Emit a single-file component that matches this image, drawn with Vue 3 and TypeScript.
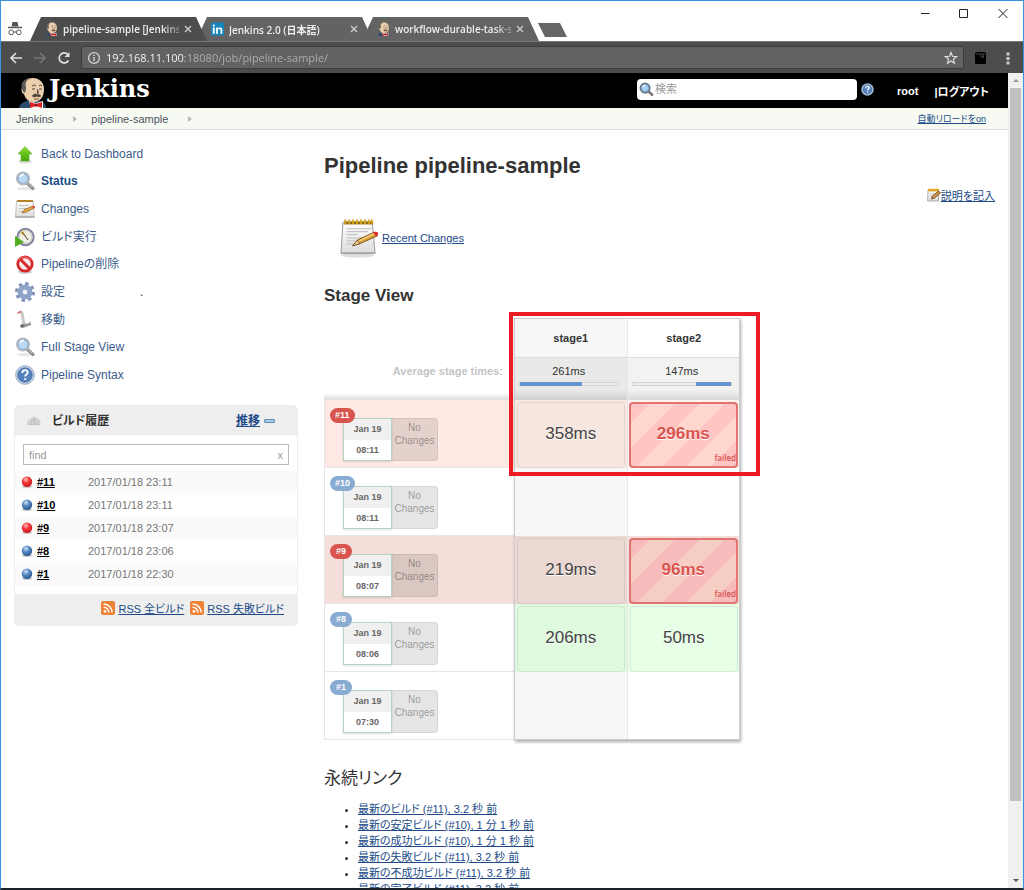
<script setup lang="ts">
import { ref } from 'vue'

interface Tab { title: string; icon: string; active?: boolean }
interface Task { label: string; icon: string; current?: boolean; dot?: boolean }
interface Build { id: string; time: string; ball: string }
interface Stage { time: string; status: 'ok' | 'failed' | 'tinted' | 'none' }
interface Run { id: string; date: string; time: string; tone: string; badge: string; stages: Stage[] }

const tabs: Tab[] = [
  { title: 'pipeline-sample [Jenkins', icon: 'butler', active: true },
  { title: 'Jenkins 2.0 (日本語)', icon: 'linkedin' },
  { title: 'workflow-durable-task-s', icon: 'butler' },
]

const tasks: Task[] = [
  { label: 'Back to Dashboard', icon: 'up' },
  { label: 'Status', icon: 'search', current: true },
  { label: 'Changes', icon: 'notepad-small' },
  { label: 'ビルド実行', icon: 'clock' },
  { label: 'Pipelineの削除', icon: 'ban' },
  { label: '設定', icon: 'gear', dot: true },
  { label: '移動', icon: 'truck' },
  { label: 'Full Stage View', icon: 'search' },
  { label: 'Pipeline Syntax', icon: 'help' },
]

const builds: Build[] = [
  { id: '#11', time: '2017/01/18 23:11', ball: 'red' },
  { id: '#10', time: '2017/01/18 23:11', ball: 'blue' },
  { id: '#9', time: '2017/01/18 23:07', ball: 'red' },
  { id: '#8', time: '2017/01/18 23:06', ball: 'blue' },
  { id: '#1', time: '2017/01/18 22:30', ball: 'blue' },
]

const averages = [
  { name: 'stage1', time: '261ms', start: 0, share: 64 },
  { name: 'stage2', time: '147ms', start: 64, share: 36 },
]

const none: Stage = { time: '', status: 'none' }
const runs: Run[] = [
  { id: '#11', date: 'Jan 19', time: '08:11', tone: 'fail', badge: 'red', stages: [{ time: '358ms', status: 'tinted' }, { time: '296ms', status: 'failed' }] },
  { id: '#10', date: 'Jan 19', time: '08:11', tone: 'plain', badge: 'blue', stages: [none, none] },
  { id: '#9', date: 'Jan 19', time: '08:07', tone: 'fail-dark', badge: 'red', stages: [{ time: '219ms', status: 'tinted' }, { time: '96ms', status: 'failed' }] },
  { id: '#8', date: 'Jan 19', time: '08:06', tone: 'plain', badge: 'blue', stages: [{ time: '206ms', status: 'ok' }, { time: '50ms', status: 'ok' }] },
  { id: '#1', date: 'Jan 19', time: '07:30', tone: 'plain', badge: 'blue', stages: [none, none] },
]

const permalinks = [
  '最新のビルド (#11), 3.2 秒 前',
  '最新の安定ビルド (#10), 1 分 1 秒 前',
  '最新の成功ビルド (#10), 1 分 1 秒 前',
  '最新の失敗ビルド (#11), 3.2 秒 前',
  '最新の不成功ビルド (#11), 3.2 秒 前',
  '最新の完了ビルド (#11), 3.2 秒 前',
]

const address = ref('192.168.11.100:18080/job/pipeline-sample/')
const query = ref('')
const filter = ref('')
</script>

<template>
  <svg class="defs" aria-hidden="true">
    <defs>
      <linearGradient id="g-green" x2="0" y2="1"><stop offset="0" stop-color="#8bdc2c" /><stop offset="1" stop-color="#43a50e" /></linearGradient>
      <linearGradient id="g-paper" x2="0" y2="1"><stop offset="0" stop-color="#fff" /><stop offset="1" stop-color="#dcdcda" /></linearGradient>
      <radialGradient id="g-ball-red" cx=".4" cy=".3" r=".7"><stop offset="0" stop-color="#ffc4c0" /><stop offset=".45" stop-color="#f5383a" /><stop offset="1" stop-color="#c8161d" /></radialGradient>
      <radialGradient id="g-ball-blue" cx=".4" cy=".3" r=".7"><stop offset="0" stop-color="#d3e4f5" /><stop offset=".45" stop-color="#5a8cc4" /><stop offset="1" stop-color="#28568f" /></radialGradient>
    </defs>
    <symbol id="butler" viewBox="0 0 28 31">
      <path d="M1 31c1-5 5-6 10-8l12 1c3 1 5 4 5 7z" fill="#2c4a6c" />
      <path d="M11 24l7 2 7-2v7H13z" fill="#f4f1ea" />
      <path d="M4 11C4 4 9 1 15 1s11 4 11 11c0 8-4 13-10 13S7 21 6 17c-2 0-3-4-2-6z" fill="#ecd0ae" />
      <path d="M4 12C2 5 7 1 13 1 8 3 7 6 8 10c0 3 0 5-2 6z" fill="#5f5c58" />
      <path d="M14 9q3-2 4 0M21 9q2-2 3 0M14 12h3M21 12h3" fill="none" stroke="#51422f" />
      <path d="M19 12q3 4 0 5M14 19q4-4 5-1 2-2 4 1-3 2-4 0-2 2-5 0z" fill="#4e4339" stroke="#4e4339" stroke-width=".5" />
      <path d="M16 22h5" stroke="#8e4e3b" />
      <path d="M12 25l6 2 6-2v6l-6-2-6 2z" fill="#db2328" />
      <circle cx="18" cy="28" r="1.500" fill="#8e1116" />
    </symbol>
    <symbol id="linkedin" viewBox="0 0 14 14">
      <rect width="14" height="14" rx="1" fill="#1686bd" />
      <path d="M2 5.500h2V12H2zM5.500 5.500h2v1c1-1.700 4.700-1.700 4.700 1.500v4h-2V8.500c0-2-2.700-1.700-2.700 0V12h-2z" fill="#fff" /><circle cx="3" cy="3.300" r="1.200" fill="#fff" />
    </symbol>
    <symbol id="up" viewBox="0 0 20 20">
      <ellipse cx="10" cy="17.500" rx="7" ry="2" fill="#ddd" /><path d="M10 2.500l7 7.500h-3v7H6v-7H3z" fill="url(#g-green)" stroke="#5bb02c" stroke-width=".6" />
    </symbol>
    <symbol id="search" viewBox="0 0 20 20">
      <ellipse cx="10" cy="17.500" rx="8" ry="1.800" fill="#e8e8e8" />
      <path d="M12 12l6 5.500" stroke="#8d8d8d" stroke-width="3.200" stroke-linecap="round" /><path d="M13 12.500l4.500 4" stroke="#c9c9c9" stroke-width="1" />
      <circle cx="8" cy="7.500" r="6" fill="#bad9f4" stroke="#b4b8bd" stroke-width="2" /><circle cx="8" cy="7.500" r="4.800" fill="none" stroke="#7ba6d4" stroke-width=".7" /><path d="M5 6q1-3 4-2.500" fill="none" stroke="#fff" stroke-width="1.500" />
    </symbol>
    <symbol id="search-dark" viewBox="0 0 16 16">
      <path d="M10 10l4 3.500" stroke="#777" stroke-width="2.800" stroke-linecap="round" />
      <circle cx="6.500" cy="6.500" r="5" fill="#a4cdf0" stroke="#6f7780" stroke-width="1.800" /><circle cx="6.500" cy="6.500" r="3.900" fill="none" stroke="#4e8fd0" stroke-width=".6" /><path d="M4 5.500q1-2 3-2" fill="none" stroke="#fff" stroke-width="1.200" />
    </symbol>
    <symbol id="notepad-small" viewBox="0 0 20 20">
      <path d="M1.500 2h16.500l1.300 16.500H.5z" fill="url(#g-paper)" stroke="#b5b5b5" stroke-width=".8" /><path d="M.5 17h18.800v1.800H.5z" fill="#b3b3b0" /><path d="M2 1h16v2H2z" fill="#b8822a" /><path d="M4 6.500h10M4 9.500h8M4 12.500h5" stroke="#c4c4c4" />
      <path d="M7 14l2.500-3.500L18 7l1.200 2-8.200 4.200z" fill="#e5a94a" stroke="#8a5a1c" stroke-width=".7" /><path d="M17 7.200l2.200-.7.800 2-1.700.9z" fill="#e14540" />
    </symbol>
    <symbol id="notepad-edit" viewBox="0 0 14 14">
      <path d="M1 2h10.500v11H.7z" fill="url(#g-paper)" stroke="#999" stroke-width=".8" /><path d="M1 .8h11v2.600H1z" fill="#e2a52b" /><path d="M3 6h6M3 8.300h4" stroke="#bbb" stroke-width=".8" />
      <path d="M4.500 11l1-3L11.500 3l2 2-6 5z" fill="#d59a42" stroke="#5c3a12" stroke-width=".8" />
    </symbol>
    <symbol id="notepad" viewBox="0 0 40 40">
      <ellipse cx="18" cy="38" rx="17" ry="2" fill="#ddd" />
      <path d="M3 4h30l3 32H1z" fill="url(#g-paper)" stroke="#999" /><path d="M1 34.500h35v2H1z" fill="#a4a4a4" />
      <path d="M4 3h30v3H4z" fill="#8a6410" /><path d="M5.500 1v5M9.500 1v5M13.500 1v5M17.500 1v5M21.500 1v5M25.500 1v5M29.500 1v5M32.500 1v5" stroke="#d1a321" stroke-width="2" />
      <path d="M7 10.500h25M7 13.500h22M7 16.500h11M7 20h16M7 23h9M7 26h8" stroke="#bbb" />
      <path d="M13 28l5-6 17-8 3 4-18 8z" fill="#d99e35" stroke="#69400d" stroke-width=".8" /><path d="M18 24l17-8.500" stroke="#f6d68a" stroke-width="1.300" /><path d="M13 28l5-6 2 4z" fill="#ecd2a0" stroke="#69400d" stroke-width=".7" /><path d="M34 14.500l2.500-1.200q3.500.7 2.300 4.200L37 18.500z" fill="#e02c2f" />
    </symbol>
    <symbol id="clock" viewBox="0 0 20 20">
      <circle cx="10.500" cy="10" r="8.200" fill="#eeeee2" stroke="#8286a0" stroke-width="2" /><circle cx="10.500" cy="10" r="6.500" fill="none" stroke="#bbb" stroke-width=".7" />
      <path d="M11 10L8 3.500 5 6z" fill="#f1bf45" /><path d="M7 5l4 5 2 3" fill="none" stroke="#444" />
      <path d="M0 9l9 6-9 5z" fill="#52ae1f" />
    </symbol>
    <symbol id="ban" viewBox="0 0 20 20">
      <ellipse cx="10" cy="18" rx="7" ry="1.800" fill="#ccc" /><circle cx="10" cy="10" r="7.200" fill="#f7e9e9" stroke="#d6272b" stroke-width="2.800" /><path d="M5 5l10 10" stroke="#d6272b" stroke-width="3" /><path d="M4 6q5-6 12 0" fill="none" stroke="#f47873" />
    </symbol>
    <symbol id="gear" viewBox="0 0 20 20">
      <circle cx="10" cy="10" r="8" fill="none" stroke="#7e90b6" stroke-width="4" stroke-dasharray="3.140 3.140" /><circle cx="10" cy="10" r="5" fill="none" stroke="#8fa2c8" stroke-width="5" /><circle cx="10" cy="10" r="2.700" fill="#f3f5fa" stroke="#7d90b9" stroke-width=".6" />
    </symbol>
    <symbol id="truck" viewBox="0 0 20 20">
      <path d="M4 2l3 1 2 12" fill="none" stroke="#c9c9c6" stroke-width="3" /><path d="M2.500 3.500q1-2 4-1.500" fill="none" stroke="#dc5a57" stroke-width="1.300" /><path d="M7 14l9-1v2l-8 3z" fill="#969696" /><circle cx="7" cy="16" r="1.800" fill="#666" /><path d="M15 11.500v3.500" stroke="#888" />
    </symbol>
    <symbol id="help" viewBox="0 0 20 20">
      <circle cx="10" cy="10" r="9.300" fill="#d0dcec" stroke="#7b93b5" stroke-width=".8" /><circle cx="10" cy="10" r="7.300" fill="#5580bb" stroke="#3c659f" stroke-width=".7" /><path d="M7.300 8c0-4 5.700-3.600 5.400-.5-.2 1.800-2.500 1.900-2.500 4M10.200 13.200v1.800" fill="none" stroke="#fff" stroke-width="1.900" />
    </symbol>
    <symbol id="rss" viewBox="0 0 14 14">
      <rect width="14" height="14" rx="2" fill="#ee8338" /><circle cx="4" cy="10.300" r="1.400" fill="#fff" /><path d="M2.600 6.200a5.300 5.300 0 0 1 5.300 5.300M2.600 3a8.500 8.500 0 0 1 8.500 8.500" fill="none" stroke="#fff" stroke-width="1.500" />
    </symbol>
    <symbol id="ball-red" viewBox="0 0 12 12"><ellipse cx="6" cy="10.500" rx="5" ry="1.500" fill="#ccc" /><circle cx="6" cy="5.700" r="5.200" fill="url(#g-ball-red)" /></symbol>
    <symbol id="ball-blue" viewBox="0 0 12 12"><ellipse cx="6" cy="10.500" rx="5" ry="1.500" fill="#ccc" /><circle cx="6" cy="5.700" r="5.200" fill="url(#g-ball-blue)" /></symbol>
    <symbol id="weather" viewBox="0 0 14 10">
      <path d="M1 8.500Q0 5 3 4q2-4 6-2 4 1 4 6.500z" fill="#d8d8d8" stroke="#bbb" stroke-width=".8" /><path d="M4 8V5l3-2 3 3v2M7 3v5" fill="none" stroke="#aaa" stroke-width=".7" />
    </symbol>
  </svg>

  <div class="window">
    <header class="tabstrip">
      <svg class="incognito" viewBox="0 0 14 15" fill="none" stroke="#555"><path d="M3.500 5.500l1-4.500h5l1 4.500z" fill="#555" stroke="none" /><path d="M0 6.500h14" stroke-width="1.400" /><circle cx="3.200" cy="11.300" r="2.400" /><circle cx="10.800" cy="11.300" r="2.400" /><path d="M5.500 11h3" /></svg>
      <nav class="tabs">
        <div v-for="(tab, i) in tabs" :key="i" class="tab" :class="{ active: tab.active }">
          <svg class="favicon"><use :href="'#' + tab.icon" /></svg>
          <span class="tab-title">{{ tab.title }}</span>
          <button class="tab-close" aria-label="閉じる"><svg viewBox="0 0 8 8"><path d="M1 1l6 6M7 1L1 7" stroke="#ccc" stroke-width="1.400" /></svg></button>
        </div>
        <button class="new-tab" aria-label="新しいタブ"></button>
      </nav>
      <div class="controls">
        <button aria-label="最小化"><svg viewBox="0 0 10 10"><path d="M1 5.500h8.500" stroke="#222" /></svg></button>
        <button aria-label="最大化"><svg viewBox="0 0 10 10"><path d="M.5 1.500h8v8h-8z" fill="none" stroke="#222" /></svg></button>
        <button aria-label="ウィンドウを閉じる"><svg viewBox="0 0 10 10"><path d="M.5 1l9 9M9.500 1l-9 9" stroke="#222" /></svg></button>
      </div>
    </header>

    <div class="toolbar">
      <button aria-label="戻る"><svg viewBox="0 0 14 14" fill="none" stroke="#e2e2e2" stroke-width="1.600"><path d="M13 7H2M7 2L2 7l5 5" /></svg></button>
      <button aria-label="進む"><svg viewBox="0 0 14 14" fill="none" stroke="#757575" stroke-width="1.600"><path d="M1 7h11M7 2l5 5-5 5" /></svg></button>
      <button aria-label="再読み込み"><svg viewBox="0 0 14 14" fill="none" stroke="#e2e2e2" stroke-width="1.700"><path d="M11.500 9.500A5 5 0 1 1 10.800 3.500" /><path d="M12.500 1v5h-5z" fill="#e2e2e2" stroke="none" /></svg></button>
      <div class="address">
        <svg viewBox="0 0 14 14" fill="none" stroke="#d5d5d5"><circle cx="7" cy="7" r="5.400" stroke-width="1.300" /><path d="M7 6v4M7 3.800v1.300" stroke-width="1.500" /></svg>
        <input v-model="address" aria-label="アドレス" />
        <button aria-label="ブックマーク"><svg viewBox="0 0 14 14" fill="none" stroke="#ddd" stroke-width="1.200"><path d="M7 1.500l1.500 3.800 4 .3-3.100 2.600 1 4L7 10l-3.400 2.200 1-4-3.100-2.600 4-.3z" /></svg></button>
      </div>
      <button class="ext" aria-label="拡張機能"><svg viewBox="0 0 12 12"><rect x="1" width="11" height="12" rx="1.500" /><path d="M2 2h9M7 2.500v3l1.200-1L9.500 5.500v-3" fill="none" stroke="#555" stroke-width=".8" /></svg></button>
      <button class="more" aria-label="メニュー"><svg viewBox="0 0 4 14" fill="#ccc"><rect x=".5" y="1.500" width="3" height="3" /><rect x=".5" y="6" width="3" height="3" /><rect x=".5" y="10.500" width="3" height="3" /></svg></button>
    </div>

    <div class="viewport">
      <div class="page">
        <header class="masthead">
          <a class="brand" href="#"><svg><use href="#butler" /></svg><span>Jenkins</span></a>
          <div class="masthead-right">
            <label class="search"><svg><use href="#search-dark" /></svg><input v-model="query" type="text" placeholder="検索" aria-label="検索" /></label>
            <a class="search-help" href="#" aria-label="ヘルプ"><svg><use href="#help" /></svg></a>
            <a class="user" href="#">root</a>
            <a class="logout" href="#">|ログアウト</a>
          </div>
        </header>
        <nav class="crumbs">
          <a href="#">Jenkins</a><i class="chevron"></i>
          <a href="#">pipeline-sample</a><i class="chevron"></i>
          <a class="reload" href="#">自動リロードをon</a>
        </nav>

        <div class="body">
          <aside>
            <nav class="tasks">
              <div v-for="task in tasks" :key="task.label" class="task">
                <a href="#" :class="{ current: task.current }"><svg><use :href="'#' + task.icon" /></svg><span>{{ task.label }}</span></a>
                <span v-if="task.dot" class="dot">.</span>
              </div>
            </nav>

            <section class="history">
              <header>
                <svg><use href="#weather" /></svg>
                <h2>ビルド履歴</h2>
                <a href="#">推移</a>
                <button class="collapse" aria-label="折りたたむ"></button>
              </header>
              <div class="filter">
                <input v-model="filter" type="text" placeholder="find" aria-label="find" />
                <button aria-label="クリア" @click="filter = ''">x</button>
              </div>
              <ul>
                <li v-for="build in builds" :key="build.id">
                  <svg><use :href="'#ball-' + build.ball" /></svg>
                  <a href="#">{{ build.id }}</a>
                  <time>{{ build.time }}</time>
                </li>
              </ul>
              <footer>
                <a href="#"><svg><use href="#rss" /></svg><span>RSS 全ビルド</span></a>
                <a href="#"><svg><use href="#rss" /></svg><span>RSS 失敗ビルド</span></a>
              </footer>
            </section>
          </aside>

          <main>
            <h1>Pipeline pipeline-sample</h1>
            <p class="describe"><a href="#"><svg><use href="#notepad-edit" /></svg><span>説明を記入</span></a></p>
            <p class="recent"><a href="#"><svg><use href="#notepad" /></svg><span>Recent Changes</span></a></p>
            <h2>Stage View</h2>

            <div class="stage-view">
              <table>
                <thead>
                  <tr class="names"><td></td><th v-for="a in averages" :key="a.name" scope="col">{{ a.name }}</th></tr>
                  <tr class="averages">
                    <th scope="row">Average stage times:</th>
                    <td v-for="a in averages" :key="a.name">
                      <div>{{ a.time }}</div>
                      <div class="meter"><div :style="{ marginLeft: a.start + '%', width: a.share + '%' }"></div></div>
                    </td>
                  </tr>
                </thead>
                <tbody>
                  <tr v-for="run in runs" :key="run.id" :class="run.tone">
                    <th scope="row">
                      <div class="run">
                        <span class="badge" :class="run.badge">{{ run.id }}</span>
                        <div class="when"><span>{{ run.date }}</span><span>{{ run.time }}</span></div>
                        <div class="changes">No<br />Changes</div>
                      </div>
                    </th>
                    <td v-for="(stage, i) in run.stages" :key="i" :class="stage.status">
                      <div class="cell">{{ stage.time }}<small v-if="stage.status === 'failed'">failed</small></div>
                    </td>
                  </tr>
                </tbody>
              </table>
              <div class="frame"></div>
              <div class="highlight"></div>
            </div>

            <h3>永続リンク</h3>
            <ul class="permalinks">
              <li v-for="link in permalinks" :key="link"><a href="#">{{ link }}</a></li>
            </ul>
          </main>
        </div>
      </div>
      <div class="scrollbar"><i class="arrow up"></i><i class="thumb"></i><i class="rest"></i><i class="arrow down"></i></div>
    </div>
  </div>
</template>

<style>
body { margin: 0; }
</style>

<style scoped>
* { box-sizing: border-box; }
h1, h2, h3, p, ul { margin: 0; padding: 0; }
button { padding: 0; border: 0; background: none; font: inherit; color: inherit; display: flex; align-items: center; justify-content: center; }
input { min-width: 0; border: 0; padding: 0; background: none; outline: 0; font: inherit; color: inherit; }
a { color: #204a87; text-decoration: none; }
svg { display: block; flex: none; }
.defs { position: absolute; width: 0; height: 0; }

.window {
  display: flex; flex-direction: column; height: 100vh; overflow: hidden;
  border: 1px solid #3d92dc; border-bottom: 2px solid #1b2329; background: #fff;
  font-family: "Liberation Sans", "Noto Sans CJK JP", sans-serif; font-size: 12px; color: #333;
  font-feature-settings: "palt";
}

.tabstrip { display: flex; height: 40px; flex: none; font-family: "Open Sans", "Noto Sans CJK JP", sans-serif; }
.incognito { width: 14px; height: 15px; margin: 20px 0 0 7px; }
.tabs { display: flex; align-items: flex-end; margin-left: 8px; }
.tab { display: flex; align-items: center; width: 177px; height: 24px; margin-right: -11px; padding: 0 15px; background: #636363; clip-path: polygon(11px 0, calc(100% - 11px) 0, 100% 100%, 0 100%); }
.tab.active { background: #4d4d4d; position: relative; z-index: 1; }
.favicon { width: 13px; height: 14px; }
.tab-title { flex: 1; min-width: 0; margin-left: 5px; white-space: nowrap; font-size: 10px; font-weight: 600; color: #eee; mask-image: linear-gradient(90deg, #000 100px, #0006 114px); }
.tab-close { width: 8px; height: 8px; margin-left: 5px; }
.tab-close svg { width: 8px; height: 8px; }
.new-tab { align-self: center; width: 29px; height: 14px; margin: 18px 0 0 10px; background: #666; clip-path: polygon(0 0, 22px 0, 100% 100%, 7px 100%); }
.controls { display: flex; gap: 29px; margin: 7px 15px 0 auto; height: 10px; }
.controls svg { width: 10px; height: 10px; }

.toolbar { display: flex; align-items: center; height: 32px; flex: none; padding: 0 13px 0 8px; gap: 10px; background: #4d4d4d; border-top: 1px solid #777; }
.toolbar svg { width: 14px; height: 14px; }
.address { flex: 1; display: flex; align-items: center; height: 23px; padding: 0 5px; gap: 5px; border: 1px solid #3d3d3d; border-radius: 2px; background: #626262; font-family: "Open Sans", sans-serif; font-size: 11px; }
.address input { flex: 1; background: linear-gradient(90deg, #fff 79px, #b0b0b0 79px); -webkit-background-clip: text; background-clip: text; color: transparent; }
.toolbar .ext svg { width: 12px; height: 12px; }
.ext { margin: 0 10px 0 0; }
.toolbar .more svg { width: 4px; }

.viewport { flex: 1; min-height: 0; display: flex; }
.page { flex: 1; min-width: 0; overflow: hidden; }
.scrollbar { width: 15px; padding: 0 2px; display: flex; flex-direction: column; align-items: stretch; background: #f0f0f0; }
.arrow { height: 15px; display: flex; align-items: center; justify-content: center; }
.arrow::before { content: ""; border: 3px solid transparent; border-top-width: 0; border-bottom-color: #999; }
.arrow.down::before { border-width: 3px 3px 0; border-color: #555 transparent; }
.thumb { flex: 713; background: #c1c1c1; }
.rest { flex: 72; }

.masthead { display: flex; align-items: center; justify-content: space-between; height: 35px; background: #000; padding: 0 19px 0 17px; }
.brand { display: flex; align-items: center; gap: 3px; color: #fff; font-family: "DejaVu Serif", serif; font-weight: bold; font-size: 24px; line-height: 32px; height: 35px; padding-bottom: 3px; }
.brand svg { width: 28px; height: 31px; margin-top: 7px; }
.masthead-right { display: flex; align-items: center; font-size: 11px; font-weight: bold; }
.masthead-right a { color: #fff; }
.search { display: flex; align-items: center; gap: 1px; width: 220px; height: 21px; padding: 0 2px; margin-bottom: 3px; border-radius: 4px; background: #fff; font-weight: normal; }
.search svg { width: 15px; height: 15px; }
.search input { flex: 1; color: #333; }
input::placeholder { color: #999; opacity: 1; }
.search-help { margin: 0 23px 2px 4px; }
.search-help svg { width: 13px; height: 13px; }
.user { margin-right: 16px; }
.crumbs { display: flex; align-items: center; height: 22px; padding: 0 22px 0 15px; border-bottom: 1px solid #ddd; background: #f6faf2; font-size: 11px; }
.crumbs a { color: #4d545d; }
.chevron { margin: 0 14px 0 20px; border: 3px solid transparent; border-left: 4px solid #bbb; border-right: 0; }
.crumbs .reload { margin-left: auto; font-size: 9px; color: #204a87; text-decoration: underline; }

.body { display: flex; }
aside { width: 297px; flex: none; padding: 10px 0 0 13px; }
.tasks { display: grid; grid-auto-rows: 1fr; height: 249px; }
.task { display: flex; align-items: center; padding-left: 1px; }
.task a { display: flex; align-items: center; gap: 6px; line-height: 16px; color: #3b5c8c; }
.task a.current { font-weight: bold; color: #204a87; }
.task svg { width: 20px; height: 20px; }
.dot { margin-left: 75px; }

.history { margin-top: 16px; border: 1px solid #eee; border-radius: 5px; background: #fff; overflow: hidden; }
.history header { display: flex; align-items: center; height: 29px; padding: 0 22px 0 12px; background: #eee; }
.history header svg { width: 14px; height: 10px; }
.history h2 { flex: 1; margin-left: 11px; font-size: 12px; line-height: 16px; }
.history header a { font-weight: bold; text-decoration: underline; line-height: 16px; }
.collapse { width: 11px; height: 4px; margin-left: 4px; border: 1px solid #5d8eba; background: #a8cbe5; border-radius: 1px; }
.filter { display: flex; align-items: center; height: 21px; margin: 9px 8px 5px; padding: 0 5px; border: 1px solid #bbb; font-size: 11px; color: #999; }
.filter input { flex: 1; color: #333; }
.history ul { display: grid; grid-auto-rows: 1fr; height: 116px; list-style: none; font-size: 11px; }
.history li { display: flex; align-items: center; padding-left: 6px; }
.history li:nth-child(odd) { background: #fafafa; }
.history li svg { width: 12px; height: 12px; margin-right: 4px; }
.history li a { width: 51px; font-weight: bold; color: #000; text-decoration: underline; }
.history time { color: #777; }
.history footer { display: flex; justify-content: flex-end; gap: 6px; margin-top: 8px; height: 31px; padding: 0 13px 3px 0; background: #eee; font-size: 11px; }
.history footer a { display: flex; align-items: center; gap: 3px; }
.history footer span { text-decoration: underline; }
.history footer svg { width: 14px; height: 14px; }

main { flex: 1; min-width: 0; padding: 23px 13px 0 26px; }
h1 { font-size: 22px; line-height: 26px; }
.describe { display: flex; justify-content: flex-end; height: 16px; margin-top: 8px; font-size: 11px; }
.describe a, .recent a { display: flex; align-items: center; }
.describe svg { width: 14px; height: 14px; }
.describe span, .recent span { text-decoration: underline; }
.recent { display: flex; margin: 15px 0 0 16px; font-size: 11px; }
.recent a { gap: 3px; }
.recent svg { width: 39px; height: 40px; }
main h2 { margin-top: 28px; font-size: 17px; line-height: 20px; }

.stage-view { position: relative; width: 416px; margin-top: 12px; }
table { width: 100%; table-layout: fixed; border-collapse: separate; border-spacing: 0; }
td, th { padding: 0; text-align: center; }
tr > :first-child { width: 191px; }
.names th { height: 40px; font-size: 11px; border-bottom: 1px solid #ddd; }
.names th:nth-child(2) { background: #f7f7f7; }
tr > :nth-child(2) { border-right: 1px solid #e6e6e6; }
.averages > * { height: 42px; padding: 5px 8px 0 4px; vertical-align: top; font-size: 11px; line-height: 16px; }
.averages th { padding: 5px 12px 0 0; text-align: right; color: #c4c4c4; background: linear-gradient(transparent 35px, #ddd); }
.averages td { background: linear-gradient(#f2f2f1 32px, #d8d8d7); }
.averages td:nth-child(2) { background: linear-gradient(#e9e9e8 32px, #cfcfcf); }
.meter { height: 4px; margin-top: 3px; border: 1px solid #d3d3d3; background: #eee; }
.meter div { height: 4px; margin-top: -1px; background: #6594d2; }
tbody th { height: 68px; border: 1px solid #e6e6e6; border-top: 0; border-right: 0; background-clip: padding-box; font-weight: normal; }
tbody td { height: 68px; padding: 2px 2px 0 2px; }
tbody td:nth-child(2) { background: #f7f7f7; }
.fail > th { background: #ffe9e4; }
.fail > td.tinted { background: #f8e6e0; }
.fail-dark > th { background: #f3ded9; }
.fail-dark > td.tinted { background: #ecd8d2; }
tbody td.failed { padding: 2px 2px 0 1px; }
.fail > td.failed { background: #fff2ef; }
.fail-dark > td.failed { background: #f5dfda; }
tbody td.ok { background: #e6ffe6; }
tbody td.ok:nth-child(2) { background: #dffadf; }

.run { position: relative; display: flex; width: 95px; height: 43px; margin: 11px 0 0 18px; }
.when { width: 49px; display: flex; flex-direction: column; border: 1px solid #b5d2c4; background: #fff; font-size: 9px; font-weight: bold; color: #666; box-shadow: 0 1px 2px #0002; }
.when span { flex: 1; line-height: 21px; }
.when span:first-child { background: #f0f0f0; }
.changes { flex: 1; padding-top: 2px; border: 1px solid #0001; border-left: 0; border-radius: 0 4px 4px 0; background: #0000001a; font-size: 10px; line-height: 13px; color: #0000005c; }
.badge { position: absolute; left: -13px; top: -10px; min-width: 22px; height: 15px; padding: 0 5px; border-radius: 8px; font-size: 9px; line-height: 15px; font-weight: bold; color: #fff; }
.badge.red { background: #d9534f; }
.badge.blue { background: #88abd2; }
.cell { position: relative; height: 66px; line-height: 62px; border: 1px solid transparent; border-radius: 4px; font-size: 17px; color: #444; text-shadow: 0 1px #fff; }
.ok .cell, .tinted .cell { border-color: #00000014; }
.failed .cell { border: 2px solid #e17470; line-height: 60px; font-weight: bold; color: #d9534f; background: repeating-linear-gradient(-45deg, #ffc5c3 0 17px, #ffd7cf 17px 35px); }
.fail-dark .failed .cell { background: repeating-linear-gradient(-45deg, #f6bbba 0 17px, #f6cec4 17px 35px); }
small { position: absolute; right: 0; bottom: 2px; font-family: "Open Sans", sans-serif; font-size: 8px; font-weight: 600; line-height: 12px; text-shadow: none; }
.frame { position: absolute; inset: 0 0 0 190px; border: 1px solid #ccc; box-shadow: 1px 2px 3px #0005; pointer-events: none; }
.highlight { position: absolute; top: -6px; left: 185px; width: 251px; height: 164px; border: 4px solid #ed1c24; pointer-events: none; }

h3 { margin-top: 29px; font-size: 17px; line-height: 20px; font-weight: normal; }
.permalinks { margin-top: 12px; padding-left: 34px; font-size: 11px; line-height: 16px; }
.permalinks li { height: 16px; }
.permalinks a { text-decoration: underline; }
</style>
